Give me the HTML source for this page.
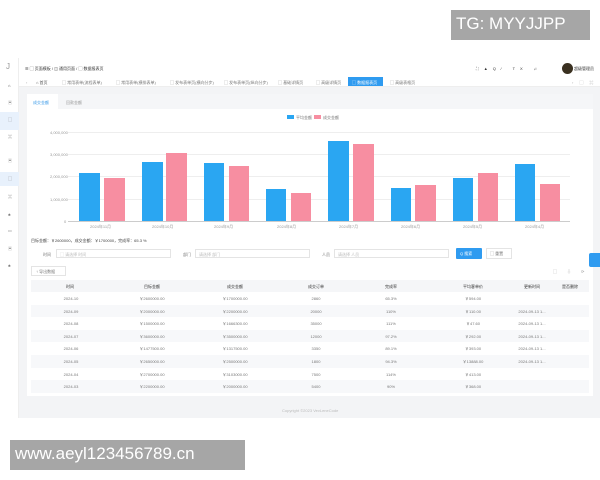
<!DOCTYPE html>
<html><head><meta charset="utf-8"><style>
*{margin:0;padding:0;box-sizing:border-box}
body{width:600px;height:480px;background:#fff;font-family:"Liberation Sans","Noto Sans CJK SC",sans-serif;position:relative;overflow:hidden;font-size:4px;color:#666}
.a{position:absolute}
.t{position:absolute;white-space:nowrap;font-size:4px;color:#777}
</style></head><body>
<div class="a" style="left:0;top:58px;width:19px;height:360px;background:#fff;border-right:1px solid #eee"></div>
<div class="a" style="left:0;top:112px;width:19px;height:18px;background:#e8f1fc"></div>
<div class="a" style="left:0;top:172px;width:19px;height:14px;background:#e8f1fc"></div>
<div class="t" style="left:6px;top:62px;font-size:8px;color:#999">J</div>
<div class="t" style="left:8px;top:83px;color:#333">⌂</div>
<div class="t" style="left:8px;top:100px">▣</div>
<div class="t" style="left:8px;top:117px">▢</div>
<div class="t" style="left:8px;top:134px">⌘</div>
<div class="t" style="left:8px;top:158px">▣</div>
<div class="t" style="left:8px;top:176px">▢</div>
<div class="t" style="left:8px;top:194px">⌘</div>
<div class="t" style="left:8px;top:212px">♣</div>
<div class="t" style="left:8px;top:228px">▭</div>
<div class="t" style="left:8px;top:246px">▣</div>
<div class="t" style="left:8px;top:263px">♣</div>
<!-- header -->
<div class="t" style="left:25px;top:66px;color:#333">☰ ▢ 页面模板 / ◫ 通用页面 / ▢ 数据报表页</div>
<div class="t" style="left:476px;top:66px;color:#333;letter-spacing:5px">⛶▲Q⁄ TX ♫</div>
<div class="a" style="left:562px;top:63px;width:11px;height:11px;border-radius:50%;background:#3a3020"></div>
<div class="t" style="left:574px;top:66px;color:#333">超级管理员</div>
<!-- tabs bar -->
<div class="a" style="left:19px;top:77px;width:581px;height:10px;background:#fff;border-bottom:1px solid #eee"></div>
<div class="t" style="left:26px;top:80px;color:#aaa">‹</div>
<div class="t" style="left:36px;top:80px;color:#555">⌂ 首页</div>
<div class="t" style="left:62px;top:80px">▢ 常用表单(流程表单)</div>
<div class="t" style="left:116px;top:80px">▢ 常用表单(横排表单)</div>
<div class="t" style="left:170px;top:80px">▢ 发布表单页(横向分步)</div>
<div class="t" style="left:224px;top:80px">▢ 发布表单页(纵向分步)</div>
<div class="t" style="left:278px;top:80px">▢ 基础详情页</div>
<div class="t" style="left:316px;top:80px">▢ 高级详情页</div>
<div class="a" style="left:348px;top:77px;width:35px;height:9px;background:#2f9bf0"></div>
<div class="t" style="left:352px;top:80px;color:#fff">▢ 数据报表页</div>
<div class="t" style="left:390px;top:80px">▢ 高级表格页</div>
<div class="t" style="left:572px;top:80px;color:#aaa;letter-spacing:6px">›▢⌘</div>
<!-- main bg -->
<div class="a" style="left:19px;top:87px;width:581px;height:331px;background:#f3f4f6"></div>
<div class="a" style="left:27px;top:94px;width:566px;height:302px;background:#fff"></div>
<div class="a" style="left:27px;top:94px;width:566px;height:15px;background:#f5f6f8"></div>
<div class="a" style="left:27px;top:94px;width:31px;height:15px;background:#fff"></div>
<div class="t" style="left:33px;top:100px;color:#3a9ae8">成交金额</div>
<div class="t" style="left:66px;top:100px;color:#999">回款金额</div>
<!-- legend -->
<div class="a" style="left:287px;top:115px;width:7px;height:4px;background:#2aa6f2"></div>
<div class="t" style="left:296px;top:115px">平均金额</div>
<div class="a" style="left:314px;top:115px;width:7px;height:4px;background:#f78ea1"></div>
<div class="t" style="left:323px;top:115px">成交金额</div>
<!-- axes -->
<div class="t" style="left:50px;top:130px;color:#999">4,000,000</div>
<div class="t" style="left:50px;top:152px;color:#999">3,000,000</div>
<div class="t" style="left:50px;top:174px;color:#999">2,000,000</div>
<div class="t" style="left:50px;top:197px;color:#999">1,000,000</div>
<div class="t" style="left:64px;top:219px;color:#999">0</div>
<div class="a" style="left:68px;top:132px;width:502px;height:1px;background:#eee"></div>
<div class="a" style="left:68px;top:154px;width:502px;height:1px;background:#eee"></div>
<div class="a" style="left:68px;top:176px;width:502px;height:1px;background:#eee"></div>
<div class="a" style="left:68px;top:199px;width:502px;height:1px;background:#eee"></div>
<div class="a" style="left:68px;top:221px;width:502px;height:1px;background:#ccc"></div>
<div class="a" style="left:79px;top:173px;width:21px;height:48px;background:#2aa6f2"></div>
<div class="a" style="left:104px;top:178px;width:21px;height:43px;background:#f78ea1"></div>
<div class="a" style="left:142px;top:162px;width:21px;height:59px;background:#2aa6f2"></div>
<div class="a" style="left:166px;top:153px;width:21px;height:68px;background:#f78ea1"></div>
<div class="a" style="left:204px;top:163px;width:20px;height:58px;background:#2aa6f2"></div>
<div class="a" style="left:229px;top:166px;width:20px;height:55px;background:#f78ea1"></div>
<div class="a" style="left:266px;top:189px;width:20px;height:32px;background:#2aa6f2"></div>
<div class="a" style="left:291px;top:193px;width:20px;height:28px;background:#f78ea1"></div>
<div class="a" style="left:328px;top:141px;width:21px;height:80px;background:#2aa6f2"></div>
<div class="a" style="left:353px;top:144px;width:21px;height:77px;background:#f78ea1"></div>
<div class="a" style="left:391px;top:188px;width:20px;height:33px;background:#2aa6f2"></div>
<div class="a" style="left:415px;top:185px;width:21px;height:36px;background:#f78ea1"></div>
<div class="a" style="left:453px;top:178px;width:20px;height:43px;background:#2aa6f2"></div>
<div class="a" style="left:478px;top:173px;width:20px;height:48px;background:#f78ea1"></div>
<div class="a" style="left:515px;top:164px;width:20px;height:57px;background:#2aa6f2"></div>
<div class="a" style="left:540px;top:184px;width:20px;height:37px;background:#f78ea1"></div>
<div class="t" style="left:90px;top:224px;color:#999">2024年11月</div>
<div class="t" style="left:152px;top:224px;color:#999">2024年10月</div>
<div class="t" style="left:214px;top:224px;color:#999">2024年9月</div>
<div class="t" style="left:277px;top:224px;color:#999">2024年8月</div>
<div class="t" style="left:339px;top:224px;color:#999">2024年7月</div>
<div class="t" style="left:401px;top:224px;color:#999">2024年6月</div>
<div class="t" style="left:463px;top:224px;color:#999">2024年5月</div>
<div class="t" style="left:525px;top:224px;color:#999">2024年4月</div>
<!-- summary -->
<div class="t" style="left:31px;top:238px;color:#444">目标金额：￥2600000，成交金额：￥1700000，完成率：65.3 %</div>
<!-- search -->
<div class="t" style="left:43px;top:252px">时间</div>
<div class="a" style="left:56px;top:249px;width:115px;height:9px;border:1px solid #e4e4e4"></div>
<div class="t" style="left:60px;top:252px;color:#bbb">▢ 请选择 时间</div>
<div class="t" style="left:183px;top:252px">部门</div>
<div class="a" style="left:195px;top:249px;width:115px;height:9px;border:1px solid #e4e4e4"></div>
<div class="t" style="left:199px;top:252px;color:#bbb">请选择 部门</div>
<div class="t" style="left:322px;top:252px">人员</div>
<div class="a" style="left:334px;top:249px;width:115px;height:9px;border:1px solid #e4e4e4"></div>
<div class="t" style="left:338px;top:252px;color:#bbb">请选择 人员</div>
<div class="a" style="left:456px;top:248px;width:26px;height:11px;background:#2f9bf0;border-radius:1px"></div>
<div class="t" style="left:460px;top:251px;color:#fff">Q 搜索</div>
<div class="a" style="left:486px;top:248px;width:26px;height:11px;border:1px solid #e4e4e4"></div>
<div class="t" style="left:490px;top:251px">▢ 重置</div>
<div class="a" style="left:589px;top:253px;width:11px;height:14px;background:#2f9bf0;border-radius:2px 0 0 2px"></div>
<!-- export -->
<div class="a" style="left:31px;top:266px;width:35px;height:10px;border:1px solid #e4e4e4"></div>
<div class="t" style="left:36px;top:269px">↑ 导出数据</div>
<div class="t" style="left:553px;top:269px;color:#999;letter-spacing:10px">▢⇩⟳</div>
<!-- table -->
<div class="a" style="left:31px;top:280px;width:558px;height:12px;background:#f5f6f8"></div>
<div style="position:absolute;left:31px;top:292px;width:558px">
<div style="height:12.6px"></div><div style="height:12.6px;background:#f7f8fa"></div><div style="height:12.6px"></div><div style="height:12.6px;background:#f7f8fa"></div><div style="height:12.6px"></div><div style="height:12.6px;background:#f7f8fa"></div><div style="height:12.6px"></div><div style="height:12.6px;background:#f7f8fa"></div>
</div>
<div class="t" style="left:66px;top:284px;color:#333">时间</div>
<div class="t" style="left:144px;top:284px;color:#333">目标金额</div>
<div class="t" style="left:227px;top:284px;color:#333">成交金额</div>
<div class="t" style="left:308px;top:284px;color:#333">成交订单</div>
<div class="t" style="left:385px;top:284px;color:#333">完成率</div>
<div class="t" style="left:463px;top:284px;color:#333">平均客单价</div>
<div class="t" style="left:524px;top:284px;color:#333">更新时间</div>
<div class="t" style="left:562px;top:284px;color:#333">是否删除</div>
<div id="rows"></div>
<script>
var d=[["2024-10","2600000.00","1700000.00","2860","65.3%","594.00",""],["2024-09","2000000.00","2200000.00","20000","110%","110.00","2024-09-13 1..."],["2024-08","1500000.00","1666300.00","35000","111%","47.60","2024-09-13 1..."],["2024-07","3600000.00","3500000.00","12000","97.2%","292.00","2024-09-13 1..."],["2024-06","1477500.00","1317500.00","3350","89.1%","393.00","2024-09-13 1..."],["2024-05","2650000.00","2500000.00","1800","94.3%","13888.00","2024-09-13 1..."],["2024-04","2700000.00","3103000.00","7500","114%","413.00",""],["2024-03","2200000.00","2000000.00","5400","90%","368.00",""]];
var xs=[71,152,235,316,391,473,532],h="";
d.forEach(function(r,i){r.forEach(function(v,j){if(!v)return;var s=(j==1||j==2||j==5)?"￥"+v:v;h+='<div class="t" style="top:'+(296+i*12.6)+'px;left:'+xs[j]+'px;transform:translateX(-50%)">'+s+'</div>';});});
document.getElementById("rows").innerHTML=h;
</script>
<div class="t" style="left:282px;top:408px;color:#bbb">Copyright ©2023 VevLeneCode</div>
<!-- watermarks -->
<div class="a" style="left:451px;top:10px;width:139px;height:30px;background:#a6a6a6"></div>
<div class="t" style="left:456px;top:14px;font-size:17px;color:#fff">TG: MYYJJPP</div>
<div class="a" style="left:10px;top:440px;width:235px;height:30px;background:#a6a6a6"></div>
<div class="t" style="left:15px;top:444px;font-size:17px;color:#fff">www.aeyl123456789.cn</div>
</body></html>
